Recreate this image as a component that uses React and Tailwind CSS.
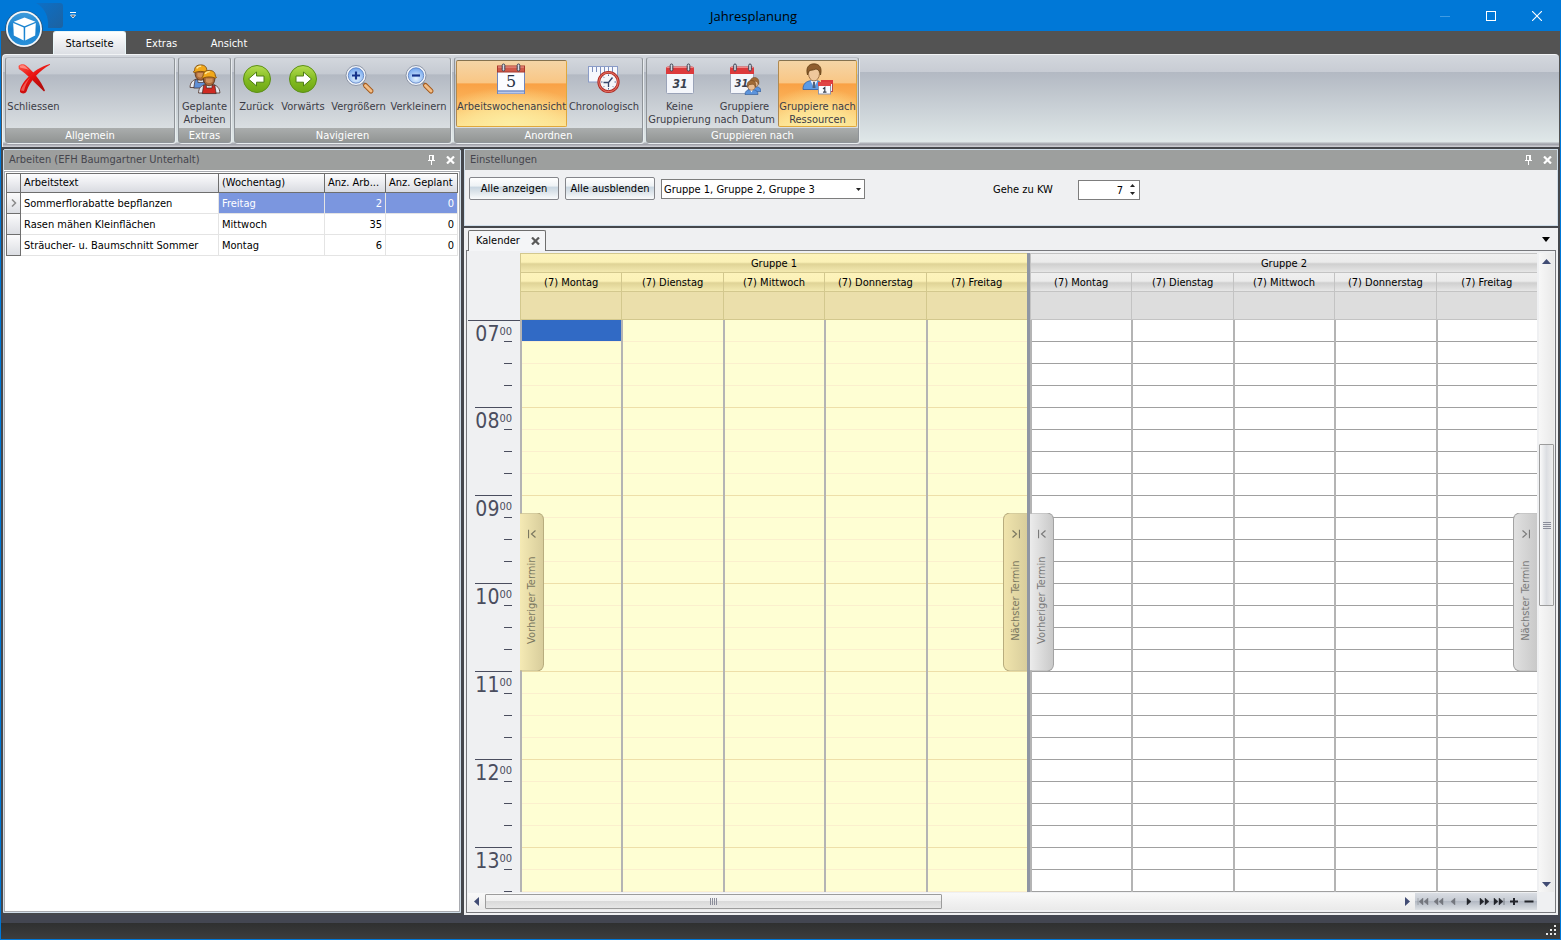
import React, { useState } from "react";

const FONT = "font-['DejaVu_Sans_Condensed','DejaVu_Sans',sans-serif]";

/* ---------- icons ---------- */

function CubeLogo() {
  return (
    <svg width="40" height="40" viewBox="0 0 40 40" aria-hidden="true">
      <defs>
        <linearGradient id="orb" x1="0" y1="0" x2="0" y2="1">
          <stop offset="0" stopColor="#3f9bdb" />
          <stop offset="0.5" stopColor="#1580cf" />
          <stop offset="1" stopColor="#2a90d8" />
        </linearGradient>
      </defs>
      <circle cx="20" cy="20.500" r="19" fill="#3d4146" opacity="0.6" />
      <circle cx="20" cy="20" r="18" fill="#f4f7fa" />
      <circle cx="20" cy="20" r="16.200" fill="url(#orb)" />
      <path d="M20.500 8.500L31.500 12.700L20.500 17.300L9.800 12.700Z" fill="#fff" />
      <path d="M9.200 14L19.700 18.500V31.500L9.800 26.500Z" fill="#fff" />
      <path d="M31.800 14L21.200 18.500V31.500L31.200 26.500Z" fill="#fff" />
    </svg>
  );
}

function CrossIcon() {
  return (
    <svg width="32" height="32" viewBox="0 0 32 32" aria-hidden="true">
      <defs>
        <linearGradient id="red" x1="0" y1="0" x2="0.6" y2="1">
          <stop offset="0" stopColor="#ff5a4c" />
          <stop offset="0.5" stopColor="#e8110f" />
          <stop offset="1" stopColor="#b40c0c" />
        </linearGradient>
      </defs>
      <path d="M.5 3C2 1 6 .8 8 2.500C15 8 23 18 27 27.500L26 28.500C18 21 9 11 .8 6Z" fill="url(#red)" />
      <path d="M32 1.800C22 7 12 18 8.500 28.500C7.500 31 3.500 31 2 29C2 21 14 6 32 1Z" fill="url(#red)" />
      <path d="M2 2.800C4 1.800 6.500 2.200 8 4L11 7C8 5.500 4 5 2 4.500Z" fill="#ff9a90" opacity="0.8" />
      <path d="M3 27.500C4 23.500 8 18.500 12 14.500C9 19 7 23 6 28Z" fill="#ff8a80" opacity="0.6" />
    </svg>
  );
}

function WorkerFigure({ body, x, y }) {
  return (
    <g transform={`translate(${x} ${y}) scale(1.120)`}>
      <path d="M0.500 21C0.500 16.500 3 14.500 6 13.500H14C17 14.500 19.500 16.500 19.500 21Z" fill="#e6e9f0" stroke="#5b4038" strokeWidth="0.8" />
      <path d="M5 14H7.500V16.500H12.500V14H15L16.200 21.500H3.800Z" fill={body} stroke="#3f2622" strokeWidth="0.6" />
      <path d="M5 6H15C15.500 11 13.500 14.500 10 14.500S4.500 11 5 6Z" fill="#a9683a" stroke="#5a3318" strokeWidth="0.8" />
      <path d="M7 8H13V11C11.500 12.500 8.500 12.500 7 11Z" fill="#cf925c" />
      <path d="M4.500 6C4.500 2.500 6.500 .8 10 .8S15.500 2.500 15.500 6C17.200 6.800 16.500 8 15 7.500C12 6.300 8 6.300 5 7.500C3.500 8 2.800 6.800 4.500 6Z" fill="#f1a81a" stroke="#7d4d10" strokeWidth="0.8" />
      <path d="M6.500 4C7 2.600 8.500 1.900 10.500 1.900" stroke="#ffe79a" strokeWidth="1.300" fill="none" />
    </g>
  );
}

function WorkersIcon() {
  return (
    <svg width="32" height="32" viewBox="0 0 32 32" aria-hidden="true">
      <WorkerFigure body="#5f8fd6" x={0.500} y={1} />
      <WorkerFigure body="#cf2a22" x={9} y={6.500} />
    </svg>
  );
}

function ArrowOrb({ flip }) {
  return (
    <svg width="32" height="32" viewBox="0 0 32 32" aria-hidden="true">
      <defs>
        <linearGradient id="grn" x1="0" y1="0" x2="0" y2="1">
          <stop offset="0" stopColor="#b4dc52" />
          <stop offset="0.5" stopColor="#84bd22" />
          <stop offset="1" stopColor="#6da514" />
        </linearGradient>
      </defs>
      <circle cx="16" cy="16" r="13.500" fill="url(#grn)" stroke="#5c8f18" />
      <path
        transform={flip ? "translate(32 0) scale(-1 1)" : undefined}
        d="M7.500 16L15.500 9V13H23V19.200H15.500V23Z"
        fill="#fff"
        stroke="#4f7d16"
        strokeLinejoin="round"
      />
    </svg>
  );
}

function MagnifierIcon({ plus }) {
  return (
    <svg width="32" height="32" viewBox="0 0 32 32" aria-hidden="true">
      <defs>
        <radialGradient id="lens" cx="0.5" cy="0.700" r="0.800">
          <stop offset="0" stopColor="#e3f2ff" />
          <stop offset="1" stopColor="#5d97ea" />
        </radialGradient>
      </defs>
      <path d="M18 18L24 24" stroke="#8a8f99" strokeWidth="3" />
      <path d="M22.500 22.500L28 28" stroke="#a55a1c" strokeWidth="5" strokeLinecap="round" />
      <path d="M22.500 22.500L28 28" stroke="#f2bd86" strokeWidth="3" strokeLinecap="round" />
      <circle cx="13" cy="12.500" r="10" fill="#f2f5fa" stroke="#8e97a8" />
      <circle cx="13" cy="12.500" r="7.700" fill="url(#lens)" stroke="#5b7fc0" strokeWidth="0.8" />
      <path d={plus ? "M9 12.500H17M13 8.500V16.500" : "M9 12.500H17"} stroke="#16348c" strokeWidth="2.200" />
    </svg>
  );
}

function Rings({ a, b, y = 1 }) {
  return (
    <g>
      {[a, b].map((x) => (
        <rect key={x} x={x - 1.300} y={y} width="2.600" height="7" rx="1.300" fill="#d9dde6" stroke="#3e4352" strokeWidth="1" />
      ))}
    </g>
  );
}

function Calendar5Icon() {
  return (
    <svg width="32" height="32" viewBox="0 0 32 32" aria-hidden="true">
      <rect x="1.500" y="4" width="27" height="26.500" fill="#fbfcff" stroke="#6f86bd" />
      <rect x="2" y="27.500" width="26" height="3" fill="#b9c8ea" />
      <path d="M2 28H28" stroke="#5f78b6" />
      <rect x="1.500" y="3" width="27" height="6" fill="#cf5a4a" stroke="#a8392c" />
      <path d="M2 4H28" stroke="#ee9d8e" />
      <Rings a={7.500} b={22.500} />
      <text x="15" y="24" textAnchor="middle" fontSize="16" fill="#273246" className="font-['DejaVu_Serif',serif]">5</text>
    </svg>
  );
}

function TimelineIcon() {
  return (
    <svg width="32" height="32" viewBox="0 0 32 32" aria-hidden="true">
      <rect x="0.500" y="3.500" width="29" height="15.500" fill="#f6f8fd" stroke="#8b9cc7" />
      <path d="M4.500 4V9M8.500 4V9M12.500 4V12M16.500 4V9M20.500 4V9M24.500 4V9" stroke="#7d8fbd" />
      <circle cx="20.500" cy="19" r="9.700" fill="#f4f6fa" stroke="#a8231c" strokeWidth="2.800" />
      <circle cx="20.500" cy="19" r="9.700" fill="none" stroke="#e0685c" strokeWidth="1.300" />
      <path d="M20.500 11.500V13M20.500 25V26.500M13 19H14.500M26.500 19H28M15.200 13.700L16.200 14.700M25.800 24.300L24.800 23.300M15.200 24.300L16.200 23.300" stroke="#5a6a94" />
      <path d="M15.500 19.500H20.500L24.500 14.500M20.500 19.500V24" stroke="#35436a" strokeWidth="1.300" fill="none" />
    </svg>
  );
}

function Calendar31Base({ w = 27 }) {
  return (
    <g>
      <rect x="2.500" y="5" width={w} height="25.500" rx="1" fill="#f4f6fb" stroke="#9aa3b8" />
      <path d={`M2 11V5.500Q2 3.500 4 3.500H${w + 1}Q${w + 3} 3.500 ${w + 3} 5.500V11Z`} fill="#dc3a3c" />
      <path d={`M3 4.500H${w + 2}`} stroke="#f08a88" />
    </g>
  );
}

function Calendar31Icon() {
  return (
    <svg width="32" height="32" viewBox="0 0 32 32" aria-hidden="true">
      <Calendar31Base />
      <Rings a={7.500} b={24.500} />
      <text x="16" y="25" textAnchor="middle" fontSize="12" fill="#39404f" className="font-['DejaVu_Sans_Condensed',sans-serif] font-bold italic">31</text>
    </svg>
  );
}

function MiniPerson({ x, y }) {
  return (
    <g transform={`translate(${x} ${y})`}>
      <path d="M0 14C0 10.500 2 9.500 5 9H8C11 9.500 13 10.500 13 14Z" fill="#5b93dc" stroke="#2c5592" strokeWidth="0.6" />
      <path d="M5 9L6.500 12L8 9Z" fill="#fff" />
      <ellipse cx="6.500" cy="5.500" rx="3.600" ry="4.200" fill="#e9bd92" stroke="#8a5a34" strokeWidth="0.6" />
      <path d="M2.300 7C1.500 2 3.500 0 6.500 0S11.500 2 10.700 7C10 5.500 9.500 4 8 3.700C6 4 4 4 3.500 5Z" fill="#a06a35" stroke="#6a431c" strokeWidth="0.5" />
    </g>
  );
}

function CalendarPeopleIcon() {
  return (
    <svg width="32" height="32" viewBox="0 0 32 32" aria-hidden="true">
      <g transform="translate(-1 0)">
        <Calendar31Base w={23} />
        <Rings a={7} b={22} />
      </g>
      <text x="12.500" y="23.500" textAnchor="middle" fontSize="11" fill="#39404f" className="font-['DejaVu_Sans_Condensed',sans-serif] font-bold italic">31</text>
      <MiniPerson x={19} y={14.500} />
      <MiniPerson x={16} y={17.500} />
    </svg>
  );
}

function PersonCalendarIcon() {
  return (
    <svg width="32" height="32" viewBox="0 0 32 32" aria-hidden="true">
      <path d="M1 26.500C1 20.500 4 18.500 9 17.500H15C18 18.500 20 20 20 26.500Z" fill="#5c9be6" stroke="#2c5ea6" strokeWidth="0.8" />
      <path d="M8.500 17.500L12 25L15.500 17.500Z" fill="#f4f7fc" />
      <path d="M11 19H13L13.500 25H10.500Z" fill="#50607c" />
      <ellipse cx="12" cy="10.500" rx="5.500" ry="7.500" fill="#efc79c" stroke="#8f6136" strokeWidth="0.8" />
      <path d="M5.500 12C3.500 5 6.500 .8 12 .8S20.500 5 18.500 12C18 9 17 6.500 14 6C11 7.500 8 7 7 8C6.500 9 6 10 5.500 12Z" fill="#8f5e2e" stroke="#59380f" strokeWidth="0.7" />
      <rect x="19.500" y="17.500" width="11" height="11" fill="#f2f4fa" stroke="#b84a48" />
      <rect x="19" y="17" width="12" height="4" fill="#dc3a3c" />
      <rect x="16.500" y="19.500" width="12" height="11.500" fill="#fbfcff" stroke="#8d97b0" />
      <rect x="16" y="19" width="13" height="4" fill="#e04444" />
      <path d="M21 26L22.800 24.500V29M21 29.200H24.500" stroke="#39404f" strokeWidth="1.200" fill="none" />
    </svg>
  );
}

function PinIcon() {
  return (
    <svg width="9" height="10" viewBox="0 0 9 10" aria-hidden="true" shapeRendering="crispEdges">
      <path d="M2 0H7V5H8V6H5V10H4V6H1V5H2ZM3 1V5H5V1Z" fill="#fff" fillRule="evenodd" />
    </svg>
  );
}

function XIcon({ color = "#fff" }) {
  return (
    <svg width="9" height="8" viewBox="0 0 9 8" aria-hidden="true">
      <path d="M1 0.500L8 7.500M8 0.500L1 7.500" stroke={color} strokeWidth="2.200" />
    </svg>
  );
}

const TRI = {
  up: "M0 5L4.500 0L9 5Z",
  down: "M0 0H9L4.500 5Z",
};

function Triangle({ dir, className = "h-[5px] w-[9px]", color = "#414c74" }) {
  return (
    <svg viewBox="0 0 9 5" preserveAspectRatio="none" className={className} aria-hidden="true">
      <path d={TRI[dir]} fill={color} />
    </svg>
  );
}

function SideTriangle({ left, color = "#414c74" }) {
  return (
    <svg width="5" height="9" viewBox="0 0 5 9" aria-hidden="true">
      <path d={left ? "M5 0V9L0 4.500Z" : "M0 0V9L5 4.500Z"} fill={color} />
    </svg>
  );
}

/* ---------- ribbon ---------- */

function RibbonButton({ width, icon, label, selected }) {
  return (
    <button
      type="button"
      aria-pressed={selected}
      className={`${width} flex h-[67px] shrink-0 flex-col items-center gap-[5px] pt-[2px] text-[11px] leading-[13px] whitespace-pre text-[#3c3c46] ${
        selected
          ? "rounded-[2px] border border-[#e0a83c] border-t-[#85724f] border-l-[#b08a50] bg-[radial-gradient(ellipse_75%_60%_at_50%_100%,#fdeea4_0%,rgba(253,234,156,0.7)_50%,rgba(253,234,156,0)_100%),linear-gradient(180deg,#f5d5a6_0%,#f9c684_34%,#f9a145_35%,#fbb961_70%,#fddd8c_100%)]"
          : "border border-transparent"
      }`}
    >
      {icon}
      <span>{label}</span>
    </button>
  );
}

function RibbonGroup({ title, width = "", children }) {
  return (
    <section
      aria-label={title}
      className={`${width} flex shrink-0 flex-col rounded-[3px] border border-[#8f9499] border-t-[#b9bdc4] bg-[linear-gradient(180deg,#d3d7dd_0%,#c5cad2_19%,#b3b9c3_20%,#d9dee1_83%)] shadow-[1px_1px_0_#e8ecee]`}
    >
      <div className="flex h-[70px] items-start px-px pt-[2px]">{children}</div>
      <h2 className="h-[14px] bg-gradient-to-b from-[#aaadad] to-[#929594] text-center text-[11px] leading-[15px] text-white">
        {title}
      </h2>
    </section>
  );
}

function Ribbon() {
  return (
    <div className="relative z-10 mx-px flex h-[93px] shrink-0 gap-[3px] rounded-t-[4px] border-t border-l border-[#f1f3f5] bg-[linear-gradient(180deg,#d3d7dd_0%,#c8ccd4_18%,#b3b9c3_19%,#dfe7e8_94%,#9c9da6_97%,#d5d5da_100%)] px-[2px] pt-[2px] pb-[4px]">
      <RibbonGroup title="Allgemein" width="w-[170px]">
        <RibbonButton width="w-[53px]" icon={<CrossIcon />} label="Schliessen" />
      </RibbonGroup>
      <RibbonGroup title="Extras">
        <RibbonButton width="w-[49px]" icon={<WorkersIcon />} label={"Geplante\nArbeiten"} />
      </RibbonGroup>
      <RibbonGroup title="Navigieren">
        <RibbonButton width="w-[41px]" icon={<ArrowOrb />} label="Zurück" />
        <RibbonButton width="w-[52px]" icon={<ArrowOrb flip />} label="Vorwärts" />
        <RibbonButton width="w-[59px]" icon={<MagnifierIcon plus />} label="Vergrößern" />
        <RibbonButton width="w-[61px]" icon={<MagnifierIcon />} label="Verkleinern" />
      </RibbonGroup>
      <RibbonGroup title="Anordnen">
        <RibbonButton width="w-[111px]" icon={<Calendar5Icon />} label="Arbeitswochenansicht" selected />
        <RibbonButton width="w-[74px]" icon={<TimelineIcon />} label="Chronologisch" />
      </RibbonGroup>
      <RibbonGroup title="Gruppieren nach">
        <RibbonButton width="w-[63px]" icon={<Calendar31Icon />} label={"Keine\nGruppierung"} />
        <RibbonButton width="w-[67px]" icon={<CalendarPeopleIcon />} label={"Gruppiere\nnach Datum"} />
        <RibbonButton width="w-[79px]" icon={<PersonCalendarIcon />} label={"Gruppiere nach\nRessourcen"} selected />
      </RibbonGroup>
    </div>
  );
}

/* ---------- title bar and ribbon tabs ---------- */

function TitleBar() {
  return (
    <header className="relative flex h-[31px] shrink-0 items-center bg-[#0078d7]">
      <div className="flex w-[84px] items-center self-stretch pt-[3px] pl-[35px]">
        <svg width="27" height="25" viewBox="0 0 27 25" className="self-start" aria-hidden="true">
          <defs>
            <linearGradient id="qat" x1="0" y1="0" x2="1" y2="1">
              <stop offset="0" stopColor="#0b70c8" />
              <stop offset="1" stopColor="#1d62a1" />
            </linearGradient>
          </defs>
          <path d="M0 0H24Q27 0 27 3V22Q27 25 24 25H12C13 14 9 5 0 0Z" fill="url(#qat)" />
        </svg>
        <button type="button" aria-label="Symbolleiste anpassen" className="mb-1 ml-[7px]">
          <svg width="6" height="7" viewBox="0 0 6 7" aria-hidden="true">
            <path d="M0 0.500H6" stroke="#fff" />
            <path d="M0.500 3H5.500L3 6Z" fill="#4b4f58" stroke="#fff" strokeWidth="0.8" />
          </svg>
        </button>
      </div>
      <h1 className="flex-1 text-center font-['Open_Sans','Noto_Sans',sans-serif] text-[13px] leading-5 text-black">Jahresplanung</h1>
      <div className="flex h-full w-[138px]">
        <button type="button" aria-label="Minimieren" className="grid flex-1 place-items-center">
          <svg width="10" height="10" viewBox="0 0 10 10" aria-hidden="true"><path d="M0 5.500H10" stroke="#3f9be3" /></svg>
        </button>
        <button type="button" aria-label="Maximieren" className="grid flex-1 place-items-center">
          <svg width="10" height="10" viewBox="0 0 10 10" aria-hidden="true"><rect x="0.500" y="0.500" width="9" height="9" fill="none" stroke="#fff" /></svg>
        </button>
        <button type="button" aria-label="Fenster schliessen" className="grid flex-1 place-items-center">
          <svg width="10" height="10" viewBox="0 0 10 10" aria-hidden="true"><path d="M0 0L10 10M10 0L0 10" stroke="#fff" strokeWidth="1.100" /></svg>
        </button>
      </div>
      <button type="button" aria-label="Anwendungsmenü" className="absolute top-[9px] left-[3px] z-20">
        <CubeLogo />
      </button>
    </header>
  );
}

function RibbonTabs() {
  return (
    <nav className="flex h-[23px] shrink-0 bg-[#535353] pl-[52px] text-[11px] leading-6 text-white">
      <a href="#startseite" aria-current="page" className="w-[73px] rounded-t-[3px] border border-b-0 border-[#e8f6f8] bg-gradient-to-b from-white to-[#dcdfe4] text-center text-black">
        Startseite
      </a>
      <a href="#extras" className="w-[71px] pt-px text-center">Extras</a>
      <a href="#ansicht" className="w-[64px] pt-px text-center">Ansicht</a>
    </nav>
  );
}

/* ---------- docked panels ---------- */

function PanelTitle({ children }) {
  return (
    <div className="flex h-5 shrink-0 items-center bg-[#9d9f9e] pr-[5px] pl-[5px] text-[11px] text-[#45454d]">
      <h2 className="flex-1 pt-px">{children}</h2>
      <div className="flex gap-[10px]">
        <button type="button" aria-label="Anheften"><PinIcon /></button>
        <button type="button" aria-label="Schliessen"><XIcon /></button>
      </div>
    </div>
  );
}

const JOBS = [
  ["Sommerflorabatte bepflanzen", "Freitag", 2, 0],
  ["Rasen mähen Kleinflächen", "Mittwoch", 35, 0],
  ["Sträucher- u. Baumschnitt Sommer", "Montag", 6, 0],
];

function JobsPanel() {
  const head = "border-t border-r border-b border-[#6e6e6e] bg-gradient-to-b from-[#fdfdfe] to-[#d9dbe1] px-[3px] text-left font-normal";
  return (
    <aside className="mb-[2px] flex w-[458px] shrink-0 flex-col rounded-t-[2px] border border-[#cfdde9] bg-white">
      <PanelTitle>Arbeiten (EFH Baumgartner Unterhalt)</PanelTitle>
      <div className="mt-px flex-1 border border-[#a9abb0] p-px">
        <table className="w-full table-fixed border-separate border-spacing-0 text-[11px] leading-[14px] whitespace-nowrap text-black">
          <colgroup>
            <col className="w-[15px]" />
            <col className="w-[198px]" />
            <col className="w-[106px]" />
            <col className="w-[61px]" />
            <col />
          </colgroup>
          <thead>
            <tr className="h-5">
              <th aria-label="Zeile" className={`${head} border-l`} />
              <th className={head}>Arbeitstext</th>
              <th className={head}>(Wochentag)</th>
              <th className={head}>Anz. Arb...</th>
              <th className={head}>Anz. Geplant</th>
            </tr>
          </thead>
          <tbody>
            {JOBS.map(([text, day, count, planned], i) => {
              const sel = i === 0 ? "bg-[#7b96df] text-white" : "";
              const cell = "border-r border-b border-[#e4e4e4] px-[3px] pt-[2px]";
              return (
                <tr key={text} className="h-[21px]">
                  <td className="border-r border-b border-l border-[#6e6e6e] bg-gradient-to-b from-[#fbfbfc] to-[#dcdee3]">
                    {i === 0 && (
                      <svg className="mx-auto block" width="6" height="8" viewBox="0 0 6 8" aria-hidden="true">
                        <path d="M1 0.500L4.500 4L1 7.500" fill="none" stroke="#8a8a8a" strokeWidth="1.500" />
                      </svg>
                    )}
                  </td>
                  <td className={cell}>{text}</td>
                  <td className={`${cell} ${sel}`}>{day}</td>
                  <td className={`${cell} ${sel} text-right`}>{count}</td>
                  <td className={`${cell} ${sel} text-right`}>{planned}</td>
                </tr>
              );
            })}
          </tbody>
        </table>
      </div>
    </aside>
  );
}

function PushButton({ children }) {
  return (
    <button
      type="button"
      className="h-[23px] w-[90px] rounded-[2px] border border-[#84858a] bg-[linear-gradient(180deg,#ffffff_0%,#eef2f5_38%,#c9d6e1_44%,#d8e1e8_62%,#fafbfc_100%)] pt-[2px] text-[11px] text-black"
    >
      {children}
    </button>
  );
}

function SettingsPanel() {
  const [week, setWeek] = useState(7);
  return (
    <section className="flex h-[77px] shrink-0 flex-col border border-[#cfdde9] bg-[#eff0f2]">
      <PanelTitle>Einstellungen</PanelTitle>
      <div className="flex items-center gap-[6px] px-[4px] pt-[7px] text-[11px] text-black">
        <PushButton>Alle anzeigen</PushButton>
        <PushButton>Alle ausblenden</PushButton>
        <div className="relative">
          <select
            aria-label="Gruppen"
            className="block h-5 w-[204px] appearance-none rounded-none border border-[#7d7d7d] bg-white px-[2px] pt-[2px] text-[11px] leading-4 text-black"
          >
            <option>Gruppe 1, Gruppe 2, Gruppe 3</option>
          </select>
          <span className="pointer-events-none absolute top-[9px] right-[4px] leading-none">
            <Triangle dir="down" className="block h-[3px] w-[5px]" color="#222" />
          </span>
        </div>
        <div className="mt-[2px] ml-[122px] flex items-center">
          <label htmlFor="kw" className="w-[85px] pt-[2px]">Gehe zu KW</label>
          <div className="flex h-5 w-[62px] border border-[#7d7d7d] bg-white">
            <input
              id="kw"
              type="number"
              value={week}
              onChange={(e) => setWeek(Number(e.target.value))}
              className="w-full min-w-0 flex-1 appearance-none pt-[2px] pr-[3px] text-right text-[11px] leading-4 [-moz-appearance:textfield] [&::-webkit-inner-spin-button]:appearance-none"
            />
            <div className="flex w-[13px] flex-col items-center justify-around py-px">
              <button type="button" aria-label="Woche erhöhen" onClick={() => setWeek(week + 1)}>
                <Triangle dir="up" className="block h-[3px] w-[5px]" color="#222" />
              </button>
              <button type="button" aria-label="Woche verringern" onClick={() => setWeek(week - 1)}>
                <Triangle dir="down" className="block h-[3px] w-[5px]" color="#222" />
              </button>
            </div>
          </div>
        </div>
      </div>
    </section>
  );
}

/* ---------- calendar ---------- */

const HOURS = ["07", "08", "09", "10", "11", "12", "13"];
const DAYS = ["Montag", "Dienstag", "Mittwoch", "Donnerstag", "Freitag"];
const THEMES = {
  yellow: {
    head: "border-[#d3c88e] bg-[linear-gradient(180deg,#fdf3bb_0%,#fbf1b7_45%,#dfd396_55%,#f3e9b0_100%)]",
    allDay: "border-[#d3c88e] bg-[#ebdfab]",
    cell: "bg-[#fefed3] border-[#fbefcd]",
    hour: "bg-[#fefed3] border-[#eedfa9]",
    tab: "border-[#b8ad7e] text-[#7b7860]",
    back: "bg-gradient-to-r from-[#f5eab4] to-[#d8cd9c]",
    next: "bg-gradient-to-r from-[#f0e4ac] to-[#d8cd9c]",
  },
  gray: {
    head: "border-[#c3c3c3] bg-[linear-gradient(180deg,#efefef_0%,#ebebeb_45%,#cfcfcf_55%,#e6e6e6_100%)]",
    allDay: "border-[#c3c3c3] bg-[#dddddd]",
    cell: "bg-white border-[#a0a0a0]",
    hour: "bg-white border-[#a0a0a0]",
    tab: "border-[#a3a3a3] text-[#7a7a7a]",
    back: "bg-gradient-to-r from-[#ececec] to-[#c9c9c9]",
    next: "bg-gradient-to-r from-[#e0e0e0] to-[#c9c9c9]",
  },
};

function TimeRuler() {
  return (
    <div className="flex w-[52px] shrink-0 flex-col overflow-hidden text-[#4a4d5e]">
      <div className="h-[67px] shrink-0" />
      <div className="h-px shrink-0 bg-[#4a4d5e]" />
      {HOURS.map((h, i) => (
        <div
          key={h}
          className={`${i === 0 ? "h-[87px] grid-rows-[20px_22px_22px_1fr]" : "h-[88px] grid-rows-[21px_22px_22px_1fr]"} mr-2 ml-[7px] grid shrink-0 border-b border-[#4a4d5e]`}
        >
          <div className="flex justify-end leading-none">
            <span className="text-[21px] leading-[27px]">{h}</span>
            <span className="pt-[5px] text-[11px]">00</span>
          </div>
          <div className="ml-auto w-2 border-t border-[#4a4d5e]" />
          <div className="ml-auto w-2 border-t border-[#4a4d5e]" />
          <div className="ml-auto w-2 border-t border-[#4a4d5e]" />
        </div>
      ))}
    </div>
  );
}

function JumpTab({ label, next, theme }) {
  return (
    <button
      type="button"
      className={`absolute top-1/2 flex h-[159px] w-6 -translate-y-1/2 flex-col items-center border pt-4 text-[11px] leading-[14px] ${theme.tab} ${
        next ? `right-0 rounded-l-[7px] border-r-0 ${theme.next}` : `left-0 rounded-r-[7px] border-l-0 ${theme.back}`
      }`}
    >
      <svg className="shrink-0" width="8" height="9" viewBox="0 0 8 9" fill="none" stroke="currentColor" strokeWidth="1.200" aria-hidden="true">
        <path d={next ? "M0.500 1L4.500 4.500L0.500 8M7.500 0V9" : "M7.500 1L3.500 4.500L7.500 8M0.500 0V9"} />
      </svg>
      <span className="flex flex-1 items-center justify-center pb-2">
        <span className="rotate-180 [writing-mode:vertical-rl]">{label}</span>
      </span>
    </button>
  );
}

function ResourceGroup({ name, theme, selected }) {
  return (
    <section aria-label={name} className="flex min-w-0 flex-1 flex-col overflow-hidden text-center text-[11px] text-black">
      <h3 className={`h-5 shrink-0 border-t border-b border-l leading-[19px] ${theme.head}`}>{name}</h3>
      <div className="grid shrink-0 grid-cols-5">
        {DAYS.map((d) => (
          <div key={d} className={`h-[19px] border-b border-l leading-[19px] ${theme.head}`}>(7) {d}</div>
        ))}
      </div>
      <div className="relative flex min-h-0 flex-1 flex-col">
        <div className="grid shrink-0 grid-cols-5">
          {DAYS.map((d) => (
            <div key={d} className={`h-7 border-b border-l ${theme.allDay}`} />
          ))}
        </div>
        <div className="grid min-h-0 flex-1 grid-cols-5 overflow-hidden">
          {DAYS.map((d, c) => (
            <div key={d} className="border-l-2 border-[#b4b4b4]">
              {HOURS.flatMap((h) =>
                [0, 1, 2, 3].map((q) => (
                  <div key={h + q} className={`h-[22px] border-b ${q === 3 ? theme.hour : theme.cell}`}>
                    {selected && c === 0 && h === "07" && q === 0 && <div className="h-full bg-[#316ac5]" />}
                  </div>
                ))
              )}
            </div>
          ))}
        </div>
        <JumpTab label="Vorheriger Termin" theme={theme} />
        <JumpTab label="Nächster Termin" next theme={theme} />
      </div>
    </section>
  );
}

function VerticalScroll() {
  return (
    <div className="ml-[2px] flex w-[15px] shrink-0 flex-col items-center bg-gradient-to-r from-[#f7f7f7] to-[#e9e9e9]">
      <button type="button" aria-label="Nach oben" className="grid h-4 place-items-center"><Triangle dir="up" /></button>
      <div className="flex min-h-0 w-full flex-1 flex-col">
        <div className="grow-[176]" />
        <div className="grid h-[162px] w-full shrink-0 place-items-center rounded-[1px] border border-[#9c9c9c] bg-gradient-to-r from-[#fafafa] via-[#dcdee2] to-[#eeeeee]">
          <div className="flex w-2 flex-col gap-px">
            {[0, 1, 2, 3].map((i) => <div key={i} className="h-px bg-[#8b8d9a]" />)}
          </div>
        </div>
        <div className="grow-[271]" />
      </div>
      <button type="button" aria-label="Nach unten" className="grid h-4 place-items-center"><Triangle dir="down" /></button>
    </div>
  );
}

const NAV = [
  ["Erster", "M1 0V9M6 0V9L2 4.500ZM11 0V9L7 4.500Z", false],
  ["Seite zurück", "M6 0V9L2 4.500ZM11 0V9L7 4.500Z", false],
  ["Zurück", "M8 0V9L4 4.500Z", false],
  ["Weiter", "M5 0V9L9 4.500Z", true],
  ["Seite vor", "M2 0V9L6 4.500ZM7 0V9L11 4.500Z", true],
  ["Letzter", "M1 0V9L5 4.500ZM6 0V9L10 4.500ZM11 0V9", true],
  ["Hinzufügen", "M6 0.500V8.500M2 4.500H10", true],
  ["Entfernen", "M1.500 4.500H10.500", true],
];

function HorizontalScroll() {
  return (
    <div className="mt-px flex h-[17px] shrink-0 items-stretch">
      <div className="flex min-w-0 flex-1 items-center bg-gradient-to-b from-[#f9f9f9] to-[#eaeaea]">
        <button type="button" aria-label="Nach links" className="grid w-[17px] shrink-0 place-items-center"><SideTriangle left /></button>
        <div className="min-w-0 flex-1">
          <div className="grid h-[15px] w-1/2 place-items-center rounded-[1px] border border-[#9c9c9c] bg-[linear-gradient(180deg,#f6f6f6_0%,#f0f0f0_45%,#dadada_50%,#e6e6e6_100%)]">
            <div className="flex h-[7px] gap-px">
              {[0, 1, 2, 3].map((i) => <div key={i} className="w-px bg-[#8b8d9a]" />)}
            </div>
          </div>
        </div>
        <button type="button" aria-label="Nach rechts" className="grid w-4 shrink-0 place-items-center"><SideTriangle /></button>
      </div>
      <div className="mr-[17px] flex w-[122px] shrink-0 items-center justify-around bg-[linear-gradient(180deg,#d9dde3_0%,#c5cad2_48%,#b3b9c3_50%,#dde1e5_100%)]">
        {NAV.map(([label, d, on], i) => (
          <button key={label} type="button" aria-label={label}>
            <svg className="block" width="12" height="7" viewBox="0 0 12 9" preserveAspectRatio={i > 5 ? "xMidYMid slice" : "none"} aria-hidden="true">
              <path
                d={d}
                fill={on ? "#23252b" : "#74777e"}
                stroke={on ? "#23252b" : "#74777e"}
                strokeWidth={i > 5 ? 2 : 0.500}
              />
            </svg>
          </button>
        ))}
      </div>
    </div>
  );
}

function CalendarPanel() {
  return (
    <main className="flex min-h-0 flex-1 flex-col bg-[#eff0f2] px-[2px] pb-[2px] text-[11px]">
      <div className="flex h-[22px] shrink-0 items-end pl-[2px]">
        <div className="z-10 -mb-px flex h-[21px] w-[78px] items-center justify-between rounded-t-[2px] border border-b-0 border-[#6e6e6e] bg-[#f4f5f7] pr-[5px] pl-[7px] text-black">
          <span className="pt-px">Kalender</span>
          <button type="button" aria-label="Kalender schliessen"><XIcon color="#5a5a5a" /></button>
        </div>
        <button type="button" aria-label="Fensterliste" className="mr-[6px] mb-[8px] ml-auto">
          <Triangle dir="down" className="block h-[5px] w-[8px]" color="#000" />
        </button>
      </div>
      <div className="flex min-h-0 flex-1 flex-col border border-[#77787c] px-px py-[2px]">
        <div className="flex min-h-0 flex-1">
          <TimeRuler />
          <ResourceGroup name="Gruppe 1" theme={THEMES.yellow} selected />
          <div className="w-[3px] shrink-0 bg-[#8f96a3]" />
          <ResourceGroup name="Gruppe 2" theme={THEMES.gray} />
          <VerticalScroll />
        </div>
        <HorizontalScroll />
      </div>
    </main>
  );
}

function StatusBar() {
  return (
    <footer className="shrink-0">
      <div className="h-2 bg-[#434651]" />
      <div className="flex h-4 items-end justify-end bg-gradient-to-b from-[#2f3030] to-[#3d3d3d] pr-[3px] pb-[3px]">
        <svg width="12" height="12" viewBox="0 0 12 12" aria-hidden="true" fill="#e8e8e8">
          <path d="M9 1h2v2H9zM5 5h2v2H5zM9 5h2v2H9zM1 9h2v2H1zM5 9h2v2H5zM9 9h2v2H9z" />
        </svg>
      </div>
    </footer>
  );
}

export default function App() {
  return (
    <div className={`flex h-screen flex-col overflow-hidden border-r border-b border-l border-[#0078d7] bg-[#45474c] ${FONT}`}>
      <TitleBar />
      <div className="flex shrink-0 flex-col bg-[#535353]">
        <RibbonTabs />
        <Ribbon />
      </div>
      <div className="flex min-h-0 flex-1 gap-[3px] px-[2px] pt-[2px]">
        <JobsPanel />
        <div className="flex min-w-0 flex-1 flex-col gap-[2px]">
          <SettingsPanel />
          <CalendarPanel />
        </div>
      </div>
      <StatusBar />
    </div>
  );
}
